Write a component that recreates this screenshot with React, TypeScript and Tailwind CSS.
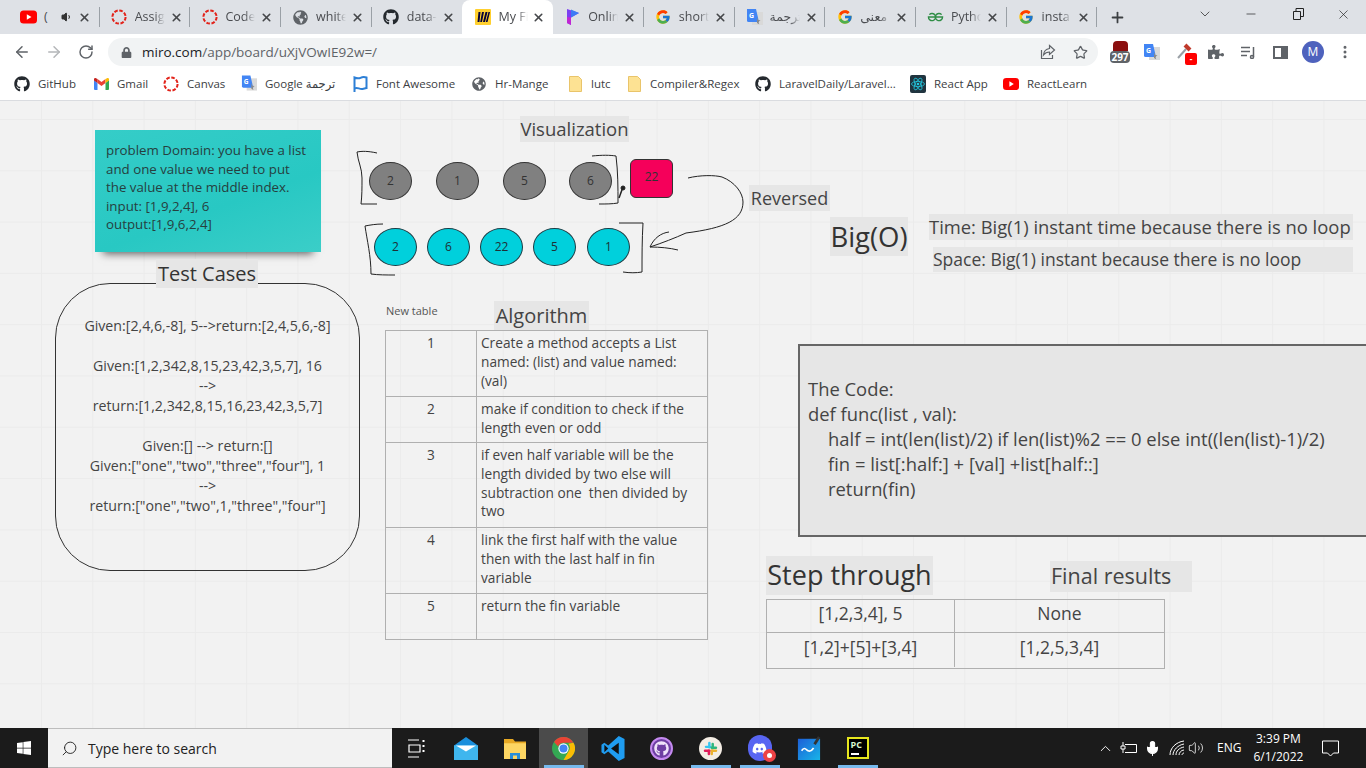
import React from 'react';
import { ArrowLeft, ArrowRight, RotateCw, Star, X, Plus, Minus, ChevronDown, ChevronUp, Volume1, MoreVertical, Search, Mic, Volume2 } from 'lucide-react';
import { FaGithub, FaGlobeAmericas, FaLock, FaPuzzlePiece, FaWindows, FaDiscord } from 'react-icons/fa';
import { FcGoogle } from 'react-icons/fc';

const YT = () => (
  <svg width="17" height="14" viewBox="0 0 17 14"><rect width="17" height="13" y="0.5" rx="3.5" fill="#f00" /><path d="M6.8 4.2v5.6L11.5 7z" fill="#fff" /></svg>
);
const Ring = () => (
  <svg width="16" height="16" viewBox="0 0 16 16"><circle cx="8" cy="8" r="6.6" fill="none" stroke="#e2231a" strokeWidth="2" strokeDasharray="3.6 1.6" /></svg>
);
const Miro = () => (
  <svg width="16" height="16" viewBox="0 0 16 16"><rect width="16" height="16" rx="1" fill="#ffd02f" /><path d="M3.5 3 L5.5 3 L4.5 13 L2.5 13z M7 3 L9 3 L7 13 L5.2 13z M10.5 3 L12.5 3 L10 13 L8 13z M13.5 3 L15 3 L12.5 13 L10.8 13z" fill="#050038" /></svg>
);
const PIcon = () => (
  <svg width="14" height="18" viewBox="0 0 14 18"><path d="M1 1 L13 5 L5 9.5 L5 17 L1 15z" fill="#7b3ff2" /><path d="M5 1.5 L13 5 L5 9.5z" fill="#3d7bf5" /><path d="M1 9 L5 9.5 L5 17 L1 15z" fill="#c026d3" /></svg>
);
const Translate = () => (
  <svg width="17" height="17" viewBox="0 0 17 17"><rect x="6" y="3" width="11" height="13" fill="#d9d9d9" /><path d="M1 0h9l3 13H2.500a1.500 1.500 0 0 1-1.500-1.500z" fill="#4285f4" /><text x="3" y="9" fontSize="7" fontWeight="700" fill="#fff" fontFamily="Open Sans, sans-serif">G</text><path d="M11 8l1 3 2.500.2-2 1.600.7 2.500-2.200-1.300" fill="#8a8a8a" /></svg>
);
const Gfg = () => (
  <svg width="18" height="10" viewBox="0 0 18 10" fill="none" stroke="#2f8d46" strokeWidth="1.400"><path d="M9 5h7.500a3.800 3.800 0 1 1-1-2.500" /><path d="M9 5H1.500a3.800 3.800 0 1 0 1-2.500" /></svg>
);
const Gmail = () => (
  <svg width="15" height="12" viewBox="0 0 15 12"><path d="M0 2v9a1 1 0 0 0 1 1h2.500V5z" fill="#4285f4" /><path d="M15 2v9a1 1 0 0 1-1 1h-2.500V5z" fill="#34a853" /><path d="M3.500 5 7.500 8 11.500 5V1L7.500 4 3.500 1z" fill="#ea4335" /><path d="M0 2.500 3.500 5V1L2 .2A1.300 1.300 0 0 0 0 1.500z" fill="#c5221f" /><path d="M15 2.500 11.500 5V1L13 .2A1.300 1.300 0 0 1 15 1.500z" fill="#fbbc04" /></svg>
);
const FlagIcon = () => (
  <svg width="15" height="16" viewBox="0 0 15 16" fill="none" stroke="#2c7fd6" strokeWidth="2"><path d="M1.500 16V1.500c3 1.300 4 1.300 6 .3s4-1 6-.3V13" /><path d="M1.500 12.500c3-1.800 4.500 1 8 .5l4-1" /></svg>
);
const Folder = () => (
  <svg width="13" height="16" viewBox="0 0 13 16"><path d="M.5.500h9l3 3v12H.5z" fill="#fde293" stroke="#e9c46a" /></svg>
);
const ReactBox = () => (
  <svg width="16" height="18" viewBox="0 0 16 18"><rect width="16" height="18" rx="2" fill="#20343f" /><g fill="none" stroke="#22c7de" strokeWidth="0.800"><ellipse cx="8" cy="9" rx="6.500" ry="2.600" /><ellipse cx="8" cy="9" rx="6.500" ry="2.600" transform="rotate(60 8 9)" /><ellipse cx="8" cy="9" rx="6.500" ry="2.600" transform="rotate(120 8 9)" /></g><circle cx="8" cy="9" r="1.300" fill="#22c7de" /></svg>
);
const Chrome = () => (
  <svg width="23" height="23" viewBox="0 0 24 24"><circle cx="12" cy="12" r="12" fill="#34a853" /><path d="M12 0a12 12 0 0 1 10.400 6H12a6 6 0 0 0-5.600 3.800L2.100 5.300A12 12 0 0 1 12 0z" fill="#ea4335" /><path d="M22.400 6A12 12 0 0 1 12 24l5.200-9A6 6 0 0 0 17 7z" fill="#fbbc04" /><circle cx="12" cy="12" r="5.400" fill="#fff" /><circle cx="12" cy="12" r="4.200" fill="#4285f4" /></svg>
);
const Mail = () => (
  <svg width="24" height="23" viewBox="0 0 25 30" preserveAspectRatio="none"><path d="M0 11 12.500 0 25 11v19H0z" fill="#1a8fdc" /><path d="M0 11h25v19H0z" fill="#3fb6ee" /><path d="M2 11h21l-10.500 8z" fill="#fff" /></svg>
);
const Explorer = () => (
  <svg width="22" height="21" viewBox="0 0 22 24" preserveAspectRatio="none"><path d="M0 1h9l2 3h11v20H0z" fill="#e8a923" /><path d="M0 6h22v18H0z" fill="#fdd663" /><path d="M6 24v-7h10v7h-3v-4H9v4z" fill="#2a8fd8" /></svg>
);
const VSCode = () => (
  <svg width="24" height="25" viewBox="0 0 24 26"><path d="M18 0l6 3v20l-6 3-11-10-4 3-3-2v-8l3-2 4 3z" fill="#1f9cf0" /><path d="M18 7v12l-8-6z" fill="#111" /><path d="M3 9l4 4-4 4z" fill="#111" /></svg>
);
const GhApp = () => (
  <div className="flex h-[23px] w-[23px] items-center justify-center rounded-full border-2 border-[#c58af0] bg-[#6e3fa3]"><FaGithub size={15} color="#efe3fa" /></div>
);
const Slack = () => (
  <svg width="23" height="23" viewBox="0 0 24 24"><circle cx="12" cy="12" r="12" fill="#f4ede4" /><rect x="6" y="9" width="7" height="2.600" rx="1.300" fill="#36c5f0" /><rect x="9.500" y="5" width="2.600" height="7" rx="1.300" fill="#36c5f0" /><rect x="13" y="6" width="2.600" height="7" rx="1.300" fill="#2eb67d" /><rect x="12" y="10" width="7" height="2.600" rx="1.300" fill="#2eb67d" /><rect x="12" y="13" width="7" height="2.600" rx="1.300" fill="#ecb22e" /><rect x="12" y="13" width="2.600" height="6" rx="1.300" fill="#ecb22e" /><rect x="5" y="13" width="7" height="2.600" rx="1.300" fill="#e01e5a" /><rect x="9" y="13" width="2.600" height="6" rx="1.300" fill="#e01e5a" /></svg>
);
const DiscordApp = () => (
  <div className="relative flex h-[26px] w-[24px] items-center justify-center rounded-full bg-[#5865f2]"><FaDiscord size={15} color="#fff" /><span className="absolute -bottom-px -right-1 flex h-[13px] w-[13px] items-center justify-center rounded-full bg-[#ed4245]"><span className="h-[5px] w-[5px] rounded-full bg-white" /></span></div>
);
const Board = () => (
  <svg width="24" height="24" viewBox="0 0 24 26"><defs><linearGradient id="wb" x1="0" y1="0" x2="1" y2="1"><stop offset="0" stopColor="#1d5fd8" /><stop offset="1" stopColor="#18b5e8" /></linearGradient></defs><rect y="3" width="24" height="23" fill="url(#wb)" /><path d="M4 16c3-5 5-1 7 0s4 0 6-3" fill="none" stroke="#fff" strokeWidth="1.800" /><path d="M18 9 23 1" stroke="#333" strokeWidth="3" /></svg>
);
const PyCharm = () => (
  <div className="flex h-[22px] w-[22px] flex-col justify-between border-2 border-[#e6e61e] bg-black px-[2px] py-[1px]"><span className="text-[9px] font-bold leading-[10px] text-[#d9f7d0]">PC</span><span className="mb-[1px] block h-[2px] w-[8px] bg-white" /></div>
);

type TabT = { icon: React.ReactNode; title: string; active?: boolean; sep?: boolean; speaker?: boolean };
const tabs: TabT[] = [
  { icon: <YT />, title: '(', speaker: true, sep: true },
  { icon: <Ring />, title: 'Assign', sep: true },
  { icon: <Ring />, title: 'Code', sep: true },
  { icon: <FaGlobeAmericas size={15} color="#5f6368" />, title: 'white', sep: true },
  { icon: <FaGithub size={16} color="#24292e" />, title: 'data-', sep: false },
  { icon: <Miro />, title: 'My Fi', active: true },
  { icon: <PIcon />, title: 'Online', sep: true },
  { icon: <FcGoogle size={16} />, title: 'short', sep: true },
  { icon: <Translate />, title: 'ترجمة', sep: true },
  { icon: <FcGoogle size={16} />, title: 'معنى', sep: true },
  { icon: <Gfg />, title: 'Pytho', sep: true },
  { icon: <FcGoogle size={16} />, title: 'insta', sep: true },
];

const Tab = ({ t }: { t: TabT }) => (
  <div className={t.active ? 'relative flex h-[34px] w-[90.7px] shrink-0 items-center rounded-t-lg bg-white pl-[12px]' : 'relative flex h-[34px] w-[90.7px] shrink-0 items-center pl-[11px]'}>
    <span className="flex w-[17px] shrink-0 justify-center">{t.icon}</span>
    <span className={t.speaker ? 'ml-[7px] w-[6px] overflow-hidden whitespace-nowrap text-[12.500px] text-[#4a4c50]' : 'ml-[7px] w-[30px] overflow-hidden whitespace-nowrap text-[12.500px] text-[#4a4c50] [mask-image:linear-gradient(to_right,#000_65%,transparent)]'}>{t.title}</span>
    {t.speaker && <Volume1 size={12} className="ml-[11px] fill-[#333] text-[#333]" />}
    <X size={13} strokeWidth={3} className={t.speaker ? 'absolute left-[69px] text-[#45474a]' : 'absolute left-[70px] text-[#45474a]'} />
    {t.sep && <span className="absolute right-0 h-[20px] w-px bg-[#9aa0a6]" />}
  </div>
);

type BM = { icon: React.ReactNode; label: string; w: string };
const bookmarks: BM[] = [
  { icon: <FaGithub size={16} color="#24292e" />, label: 'GitHub', w: 'w-[79px]' },
  { icon: <Gmail />, label: 'Gmail', w: 'w-[70px]' },
  { icon: <Ring />, label: 'Canvas', w: 'w-[78px]' },
  { icon: <Translate />, label: 'Google ترجمة', w: 'w-[111px]' },
  { icon: <FlagIcon />, label: 'Font Awesome', w: 'w-[119px]' },
  { icon: <FaGlobeAmericas size={14} color="#5f6368" />, label: 'Hr-Mange', w: 'w-[96px]' },
  { icon: <Folder />, label: 'lutc', w: 'w-[59px]' },
  { icon: <Folder />, label: 'Compiler&Regex', w: 'w-[129px]' },
  { icon: <FaGithub size={16} color="#24292e" />, label: 'LaravelDaily/Laravel...', w: 'w-[155px]' },
  { icon: <ReactBox />, label: 'React App', w: 'w-[93px]' },
  { icon: <YT />, label: 'ReactLearn', w: 'w-[100px]' },
];

const gray = [
  { n: '2', c: 'left-[369px]' },
  { n: '1', c: 'left-[436px]' },
  { n: '5', c: 'left-[503px]' },
  { n: '6', c: 'left-[569px]' },
];
const cyan = [
  { n: '2', c: 'left-[374px]' },
  { n: '6', c: 'left-[427px]' },
  { n: '22', c: 'left-[480px]' },
  { n: '5', c: 'left-[533px]' },
  { n: '1', c: 'left-[587px]' },
];

const algo = [
  { n: '1', h: 'h-[66px]', t: 'Create a method accepts a List named: (list) and value named: (val)' },
  { n: '2', h: 'h-[46px]', t: 'make if condition to check if the length even or odd' },
  { n: '3', h: 'h-[85px]', t: 'if even half variable will be the length divided by two else will subtraction one  then divided by two' },
  { n: '4', h: 'h-[66px]', t: 'link the first half with the value then with the last half in fin variable' },
  { n: '5', h: 'h-[45px]', t: 'return the fin variable' },
];

const taskApps: { el: React.ReactNode; cls: string; line?: boolean }[] = [
  { el: <svg width="17" height="19" viewBox="0 0 17 19" fill="none" stroke="#fff" strokeWidth="1.200"><path d="M0 1h11M0 18h11M1 6h11v7H1z" /><path d="M15.500 1v2M15.500 6v2M15.500 11v2" strokeWidth="2" /></svg>, cls: '' },
  { el: <Mail />, cls: '' },
  { el: <Explorer />, cls: '' },
  { el: <Chrome />, cls: 'bg-[#4b4b4b]', line: true },
  { el: <VSCode />, cls: '' },
  { el: <GhApp />, cls: '' },
  { el: <Slack />, cls: '', line: true },
  { el: <DiscordApp />, cls: '', line: true },
  { el: <Board />, cls: '' },
  { el: <PyCharm />, cls: '', line: true },
];

export default function App() {
  return (
    <div className="flex h-[768px] w-[1366px] flex-col overflow-hidden bg-white font-['Open_Sans','DejaVu_Sans',sans-serif]">
      {/* Tab strip */}
      <div className="flex h-[34px] shrink-0 items-center bg-[#dee1e6] pl-[9px]">
        {tabs.map((t, i) => <Tab key={i} t={t} />)}
        <Plus size={17} strokeWidth={2.500} className="ml-[12px] text-[#3c4043]" />
        <ChevronDown size={16} strokeWidth={1.200} className="ml-[71px] -translate-y-[3px] text-[#333]" />
        <Minus size={14} strokeWidth={1.200} className="ml-[31px] -translate-y-[3px] text-[#222]" />
        <svg width="11" height="12" viewBox="0 0 11 12" fill="none" stroke="#222" className="ml-[35px] -translate-y-[3px]"><path d="M.5 3.500h7v8h-7zM3 3.500v-3h7.500v8H7.500" /></svg>
        <X size={15} strokeWidth={1.100} className="ml-[32px] -translate-y-[3px] text-[#222]" />
      </div>

      {/* Toolbar */}
      <div className="flex h-[33px] shrink-0 items-center bg-white pt-[3px]">
        <ArrowLeft size={18} strokeWidth={2} className="ml-[13px] text-[#5f6368]" />
        <ArrowRight size={18} strokeWidth={2} className="ml-[14px] text-[#b4b6b9]" />
        <RotateCw size={16} strokeWidth={2.200} className="ml-[15px] text-[#5f6368]" />
        <div className="ml-[14px] flex h-[28px] w-[990px] items-center rounded-full bg-[#f1f3f4] pl-[13px]">
          <FaLock size={11} color="#5f6368" />
          <span className="ml-[10px] text-[13.500px] text-[#202124]">miro.com<span className="text-[#5f6368]">/app/board/uXjVOwIE92w=/</span></span>
          <svg width="16" height="16" viewBox="0 0 16 16" fill="none" stroke="#5f6368" strokeWidth="1.200" className="ml-auto"><path d="M1.500 6v8.500h11V11" /><path d="M9.500 1.500 14.500 6l-5 4.500V8C7 8 5 9 3.500 11c.3-3.500 2.500-6 6-6.500z" /></svg>
          <Star size={15} strokeWidth={2} className="ml-[17px] mr-[10px] text-[#5f6368]" />
        </div>
        <div className="relative ml-[13px] flex w-[18px] flex-col items-center">
          <span className="h-[10px] w-[15px] rounded-t-sm bg-[#8b0f0f]" />
          <span className="h-[12px] w-[20px] rounded-sm bg-[#5f6368] text-center text-[10px] font-bold leading-[12px] text-white">297</span>
        </div>
        <span className="ml-[14px] flex w-[17px]"><Translate /></span>
        <div className="relative ml-[16px] h-[20px] w-[18px]">
          <svg width="16" height="18" viewBox="0 0 16 18" fill="none"><path d="M2 16 10 7" stroke="#9aa0a6" strokeWidth="2" /><path d="M9 3 14 8" stroke="#c0392b" strokeWidth="4" /></svg>
          <span className="absolute -bottom-[3px] left-[9px] flex h-[12px] w-[12px] items-center justify-center rounded-[2px] bg-[#f00] text-[8px] font-bold leading-none text-white">-</span>
        </div>
        <FaPuzzlePiece size={16} color="#5f6368" className="ml-[14px]" />
        <svg width="15" height="13" viewBox="0 0 15 13" fill="none" stroke="#5f6368" strokeWidth="1.500" className="ml-[17px]"><path d="M0 1.500h9M0 5.500h9M0 9.500h6M12.500 1v10" /><circle cx="11" cy="11" r="1.500" /></svg>
        <span className="ml-[17px] flex h-[13px] w-[15px] justify-end border-2 border-[#5f6368]"><span className="h-full w-[5px] bg-[#5f6368]" /></span>
        <span className="ml-[14px] flex h-[22px] w-[22px] items-center justify-center rounded-full bg-[#4e62bd] text-[12px] text-white">M</span>
        <MoreVertical size={16} strokeWidth={2.500} className="ml-[13px] text-[#5f6368]" />
      </div>

      {/* Bookmarks */}
      <div className="flex h-[34px] shrink-0 items-center border-b border-[#dadce0] bg-white pl-[14px]">
        {bookmarks.map((b, i) => (
          <div key={i} className={`flex shrink-0 items-center gap-[8px] ${b.w}`}>
            <span className="flex w-[16px] shrink-0 justify-center">{b.icon}</span>
            <span className="whitespace-nowrap text-[11.500px] text-[#3c4043]">{b.label}</span>
          </div>
        ))}
      </div>

      {/* Miro board: a free canvas */}
      <div className="relative flex-1 overflow-hidden bg-[#f2f2f2] bg-[linear-gradient(to_right,#ebebeb_1px,transparent_1px),linear-gradient(to_bottom,#ebebeb_1px,transparent_1px)] bg-[size:51.300px_51.300px] bg-[position:41px_18px]">
        {/* sticky note */}
        <div className="absolute left-[95px] top-[29px] h-[122px] w-[226px] bg-[#2ac9c4] bg-[linear-gradient(160deg,#35cdc8_0%,#28c8c3_60%,#3bcec8_100%)] pl-[11px] pt-[11px] text-[13.300px] leading-[18.600px] text-[#26403f] shadow-[0_10px_8px_-8px_rgba(0,0,0,0.6)]">
          problem Domain: you have a list<br />and one value we need to put<br />the value at the middle index.<br />input: [1,9,2,4], 6<br />output:[1,9,6,2,4]
        </div>

        {/* Test cases */}
        <div className="absolute left-[55px] top-[182px] h-[288px] w-[305px] rounded-[55px] border border-[#333] pt-[32px] text-center text-[14.200px] leading-[20px] text-[#444]">
          <div>Given:[2,4,6,-8], 5--&gt;return:[2,4,5,6,-8]</div>
          <div>&nbsp;</div>
          <div>Given:[1,2,342,8,15,23,42,3,5,7], 16</div>
          <div>--&gt;</div>
          <div>return:[1,2,342,8,15,16,23,42,3,5,7]</div>
          <div>&nbsp;</div>
          <div>Given:[] --&gt; return:[]</div>
          <div>Given:["one","two","three","four"], 1</div>
          <div>--&gt;</div>
          <div>return:["one","two",1,"three","four"]</div>
        </div>
        <div className="absolute left-[156px] top-[158px] flex h-[29px] w-[102px] items-center justify-center bg-[#e6e6e6] text-[20px] text-[#333]">Test Cases</div>

        {/* Visualization */}
        <div className="absolute left-[520px] top-[15px] flex h-[26px] w-[109px] items-center justify-center bg-[#e6e6e6] text-[18.500px] text-[#444]">Visualization</div>
        {gray.map((g) => (
          <div key={g.c} className={`absolute top-[61px] flex h-[38px] w-[43px] items-center justify-center rounded-[50%] border border-[#333] bg-[#808080] text-[12px] text-[#333] ${g.c}`}>{g.n}</div>
        ))}
        <div className="absolute left-[630px] top-[58px] flex h-[39px] w-[43px] items-center justify-center rounded-[6px] border border-[#333] bg-[#f5005a] pb-[3px] text-[12px] text-[#333]">22</div>
        {cyan.map((g) => (
          <div key={g.c} className={`absolute top-[127px] flex h-[38px] w-[43px] items-center justify-center rounded-[50%] border border-[#1a3c44] bg-[#00d0dc] text-[12px] text-[#1f2f35] ${g.c}`}>{g.n}</div>
        ))}
        <svg width="420" height="180" viewBox="340 101 420 180" fill="none" stroke="#222" strokeWidth="1" className="pointer-events-none absolute left-[340px] top-0">
          <path d="M377 153 C368 151 362 151 357 152 C358 162 362 168 362 178 C362 188 362 196 361 204 L377 204" />
          <path d="M592 156 C602 155 610 155 616 156 C618 172 618 188 618 203 C612 204 606 204 599 204" />
          <path d="M623 187 L619 198" strokeWidth="1.500" />
          <circle cx="623" cy="188" r="2" fill="#222" />
          <path d="M383 224 C376 224 370 225 365 226 C367 240 371 256 371 274 C378 275 387 275 395 275" />
          <path d="M619 223 L643 223 C642 240 642 256 642 272 C636 273 630 273 623 272" />
          <path d="M688 178 C700 175 715 175 722 177 C735 182 743 193 743 202 C743 220 725 228 686 233 C675 238 662 243 650 247" />
          <path d="M650 247 C654 238 661 233 669 232" />
          <path d="M650 247 C660 247 670 248 678 250" />
        </svg>
        <div className="absolute left-[749px] top-[84px] flex h-[26px] w-[81px] items-center justify-center bg-[#e6e6e6] text-[18px] text-[#444]">Reversed</div>

        {/* Big O */}
        <div className="absolute left-[830px] top-[116px] flex h-[39px] w-[78px] items-center justify-center bg-[#e6e6e6] text-[27.500px] text-[#333]">Big(O)</div>
        <div className="absolute left-[929px] top-[113px] flex h-[26px] w-[424px] items-center whitespace-nowrap bg-[#e6e6e6] text-[18.400px] text-[#444]">Time: Big(1) instant time because there is no loop</div>
        <div className="absolute left-[933px] top-[146px] flex h-[25px] w-[420px] items-center whitespace-nowrap bg-[#e6e6e6] text-[17.500px] text-[#444]">Space: Big(1) instant because there is no loop</div>

        {/* Algorithm */}
        <div className="absolute left-[386px] top-[202px] text-[11px] text-[#555]">New table</div>
        <div className="absolute left-[494px] top-[200px] flex h-[29px] w-[95px] items-center justify-center bg-[#e6e6e6] text-[20px] text-[#444]">Algorithm</div>
        <div className="absolute left-[385px] top-[229px] w-[323px] border-[1.500px] border-[#b0b0b0] text-[13.700px] leading-[18.800px] text-[#444]">
          {algo.map((r, i) => (
            <div key={r.n} className={i < algo.length - 1 ? `flex border-b-[1.500px] border-[#b0b0b0] ${r.h}` : `flex ${r.h}`}>
              <div className="w-[91px] shrink-0 border-r-[1.500px] border-[#b0b0b0] pt-[3px] text-center">{r.n}</div>
              <div className="whitespace-pre-wrap pl-[4px] pr-[6px] pt-[3px]">{r.t}</div>
            </div>
          ))}
        </div>

        {/* Code */}
        <div className="absolute left-[798px] top-[243px] h-[193px] w-[580px] border-2 border-[#666] bg-[#e6e6e6] pl-[8px] pt-[30px] text-[18.400px] leading-[25px] text-[#444]">
          <div>The Code:</div>
          <div>def func(list , val):</div>
          <div className="pl-[20px]">half = int(len(list)/2) if len(list)%2 == 0 else int((len(list)-1)/2)</div>
          <div className="pl-[20px]">fin = list[:half:] + [val] +list[half::]</div>
          <div className="pl-[20px]">return(fin)</div>
        </div>

        {/* Step through */}
        <div className="absolute left-[766px] top-[455px] flex h-[39px] w-[167px] items-center justify-center whitespace-nowrap bg-[#e6e6e6] text-[27px] text-[#333]">Step through</div>
        <div className="absolute left-[1050px] top-[460px] flex h-[31px] w-[142px] items-center bg-[#e6e6e6] pl-[1px] text-[21.500px] text-[#444]">Final results</div>
        <div className="absolute left-[766px] top-[498px] h-[70px] w-[399px] border-[1.500px] border-[#b0b0b0] text-center text-[17.500px] text-[#444]">
          <div className="flex h-[33px] border-b-[1.500px] border-[#b0b0b0]">
            <div className="w-[188px] border-r-[1.500px] border-[#b0b0b0] leading-[26px]">[1,2,3,4], 5</div>
            <div className="flex-1 leading-[26px]">None</div>
          </div>
          <div className="flex h-[34px]">
            <div className="w-[188px] border-r-[1.500px] border-[#b0b0b0] leading-[28px]">[1,2]+[5]+[3,4]</div>
            <div className="flex-1 leading-[28px]">[1,2,5,3,4]</div>
          </div>
        </div>
      </div>

      {/* Taskbar */}
      <div className="flex h-[40px] shrink-0 items-stretch bg-[#1b1b1b]">
        <div className="flex w-[48px] items-center justify-center"><FaWindows size={16} color="#fff" /></div>
        <div className="flex w-[344px] items-center border-y border-[#bdbdbd] bg-[#f2f2f2] pl-[13px]">
          <Search size={17} strokeWidth={1.300} className="-scale-x-100 text-[#222]" />
          <span className="ml-[10px] text-[14px] text-[#222]">Type here to search</span>
        </div>
        <div className="flex">
          {taskApps.map((a, i) => (
            <div key={i} className={`relative flex w-[49px] items-center justify-center ${a.cls}`}>
              {a.el}
              {a.line && <span className="absolute bottom-0 h-[3px] w-[40px] bg-[#76b9ed]" />}
            </div>
          ))}
        </div>
        <div className="flex flex-1 items-center text-white">
          <ChevronUp size={17} strokeWidth={1.300} className="ml-[215px]" />
          <svg width="18" height="14" viewBox="0 0 18 14" fill="none" stroke="#fff" className="ml-[6px]"><path d="M5 3.500h11.500v8H5M3 1v4M1 5h4v3H1zM3 8v4" /></svg>
          <Mic size={17} strokeWidth={1.500} className="ml-[6px] fill-white" />
          <svg width="16" height="16" viewBox="0 0 16 16" fill="none" stroke="#fff" strokeWidth="1" className="ml-[8px]"><path d="M1 15C1 8 7 2 15 1M4 15c0-5 5-10 11-11M7 15c0-4 3-7 8-8M10 15c0-2 2-5 5-5M13 15c0-1 1-2 2-2" /></svg>
          <Volume2 size={16} strokeWidth={1.200} className="ml-[3px]" />
          <span className="ml-[13px] text-[12px]">ENG</span>
          <div className="ml-[8px] w-[58px] text-center text-[12px] leading-[18px]">
            <div>3:39 PM</div>
            <div>6/1/2022</div>
          </div>
          <svg width="17" height="17" viewBox="0 0 17 17" fill="none" stroke="#fff" className="ml-[15px]"><path d="M.5 1h16v12h-5l-3 3-3-3h-5z" /></svg>
        </div>
      </div>
    </div>
  );
}
